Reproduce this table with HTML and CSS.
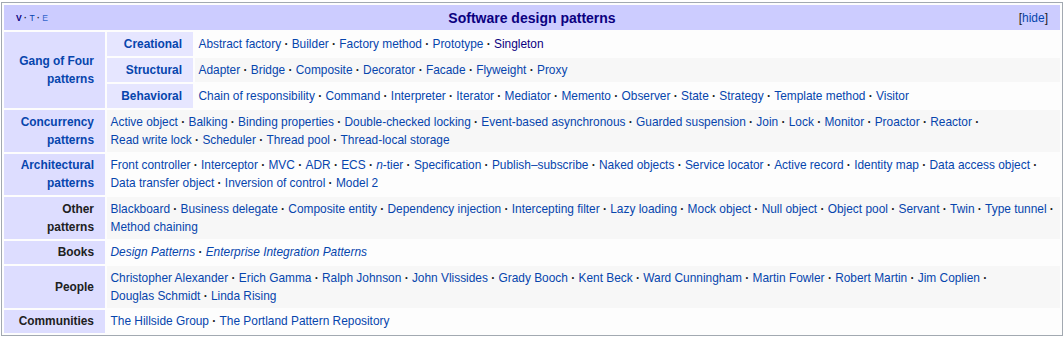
FILE: index.html
```html
<!DOCTYPE html>
<html lang="en">
<head>
<meta charset="utf-8">
<title>Software design patterns</title>
<link rel="stylesheet" href="styles.css">
</head>
<body>
<div class="navbox">
  <div class="title">
    <ul class="navbar">
      <li><a class="visited" href="#">V</a></li>
      <li><a href="#">T</a></li>
      <li><a class="edit" href="#">E</a></li>
    </ul>
    <a class="visited title-link" href="#">Software design patterns</a>
    <span class="toggle">[<a href="#">hide</a>]</span>
  </div>

  <div class="group gof"><a href="#">Gang of Four patterns</a></div>
  <div class="subgroup"><a href="#">Creational</a></div>
  <ul class="list sub odd">
    <li><a href="#">Abstract factory</a></li>
    <li><a href="#">Builder</a></li>
    <li><a href="#">Factory method</a></li>
    <li><a href="#">Prototype</a></li>
    <li><a class="visited" href="#">Singleton</a></li>
  </ul>
  <div class="subgroup"><a href="#">Structural</a></div>
  <ul class="list sub even">
    <li><a href="#">Adapter</a></li>
    <li><a href="#">Bridge</a></li>
    <li><a href="#">Composite</a></li>
    <li><a href="#">Decorator</a></li>
    <li><a href="#">Facade</a></li>
    <li><a href="#">Flyweight</a></li>
    <li><a href="#">Proxy</a></li>
  </ul>
  <div class="subgroup"><a href="#">Behavioral</a></div>
  <ul class="list sub odd">
    <li><a href="#">Chain of responsibility</a></li>
    <li><a href="#">Command</a></li>
    <li><a href="#">Interpreter</a></li>
    <li><a href="#">Iterator</a></li>
    <li><a href="#">Mediator</a></li>
    <li><a href="#">Memento</a></li>
    <li><a href="#">Observer</a></li>
    <li><a href="#">State</a></li>
    <li><a href="#">Strategy</a></li>
    <li><a href="#">Template method</a></li>
    <li><a href="#">Visitor</a></li>
  </ul>

  <div class="group"><a href="#">Concurrency patterns</a></div>
  <ul class="list wide even">
    <li><a href="#">Active object</a></li>
    <li><a href="#">Balking</a></li>
    <li><a href="#">Binding properties</a></li>
    <li><a href="#">Double-checked locking</a></li>
    <li><a href="#">Event-based asynchronous</a></li>
    <li><a href="#">Guarded suspension</a></li>
    <li><a href="#">Join</a></li>
    <li><a href="#">Lock</a></li>
    <li><a href="#">Monitor</a></li>
    <li><a href="#">Proactor</a></li>
    <li><a href="#">Reactor</a></li>
    <li><a href="#">Read write lock</a></li>
    <li><a href="#">Scheduler</a></li>
    <li><a href="#">Thread pool</a></li>
    <li><a href="#">Thread-local storage</a></li>
  </ul>

  <div class="group"><a href="#">Architectural patterns</a></div>
  <ul class="list wide odd">
    <li><a href="#">Front controller</a></li>
    <li><a href="#">Interceptor</a></li>
    <li><a href="#">MVC</a></li>
    <li><a href="#">ADR</a></li>
    <li><a href="#">ECS</a></li>
    <li><a href="#"><i>n</i>-tier</a></li>
    <li><a href="#">Specification</a></li>
    <li><a href="#">Publish–subscribe</a></li>
    <li><a href="#">Naked objects</a></li>
    <li><a href="#">Service locator</a></li>
    <li><a href="#">Active record</a></li>
    <li><a href="#">Identity map</a></li>
    <li><a href="#">Data access object</a></li>
    <li><a href="#">Data transfer object</a></li>
    <li><a href="#">Inversion of control</a></li>
    <li><a href="#">Model 2</a></li>
  </ul>

  <div class="group plain">Other patterns</div>
  <ul class="list wide even">
    <li><a href="#">Blackboard</a></li>
    <li><a href="#">Business delegate</a></li>
    <li><a href="#">Composite entity</a></li>
    <li><a href="#">Dependency injection</a></li>
    <li><a href="#">Intercepting filter</a></li>
    <li><a href="#">Lazy loading</a></li>
    <li><a href="#">Mock object</a></li>
    <li><a href="#">Null object</a></li>
    <li><a href="#">Object pool</a></li>
    <li><a href="#">Servant</a></li>
    <li><a href="#">Twin</a></li>
    <li><a href="#">Type tunnel</a></li>
    <li><a href="#">Method chaining</a></li>
  </ul>

  <div class="group plain">Books</div>
  <ul class="list wide odd">
    <li><a href="#"><i>Design Patterns</i></a></li>
    <li><a href="#"><i>Enterprise Integration Patterns</i></a></li>
  </ul>

  <div class="group plain">People</div>
  <ul class="list wide even">
    <li><a href="#">Christopher Alexander</a></li>
    <li><a href="#">Erich Gamma</a></li>
    <li><a href="#">Ralph Johnson</a></li>
    <li><a href="#">John Vlissides</a></li>
    <li><a href="#">Grady Booch</a></li>
    <li><a href="#">Kent Beck</a></li>
    <li><a href="#">Ward Cunningham</a></li>
    <li><a href="#">Martin Fowler</a></li>
    <li><a href="#">Robert Martin</a></li>
    <li><a href="#">Jim Coplien</a></li>
    <li><a href="#">Douglas Schmidt</a></li>
    <li><a href="#">Linda Rising</a></li>
  </ul>

  <div class="group plain">Communities</div>
  <ul class="list wide odd">
    <li><a href="#">The Hillside Group</a></li>
    <li><a href="#">The Portland Pattern Repository</a></li>
  </ul>
</div>
</body>
</html>
```

FILE: styles.css
```css
html, body {
  margin: 0;
  padding: 0;
  background: #ffffff;
}

body {
  font-family: "Liberation Sans", Arial, sans-serif;
  color: #202122;
}

a {
  color: #0645ad;
  text-decoration: none;
}

a.visited {
  color: #0b0080;
}

.navbox {
  margin: 2px 0 0 1px;
  width: 1056px;
  padding: 2px;
  border: 1px solid #a2a9b1;
  background: #fdfdfd;
  display: grid;
  grid-template-columns: 101px 86px 1fr;
  grid-auto-rows: auto;
  gap: 2px;
  font-size: 11.9px;
}

.title {
  grid-column: 1 / 4;
  background: #ccccff;
  height: 25px;
  display: grid;
  grid-template-columns: 1fr auto 1fr;
  align-items: center;
  padding: 0 12px;
}

.title-link {
  font-size: 14px;
  font-weight: bold;
}

.navbar {
  margin: 0;
  padding: 0;
  list-style: none;
  display: flex;
  font-size: 8.6px;
  justify-self: start;
  line-height: 12px;
}

.navbar a.visited {
  font-weight: bold;
}

.navbar li:not(:last-child)::after {
  content: "\a0·\a0";
  font-weight: bold;
  color: #202122;
}

.navbar .edit {
  color: #3366cc;
}

.toggle {
  justify-self: end;
  font-size: 12px;
  color: #202122;
}

.group,
.subgroup {
  display: flex;
  align-items: center;
  justify-content: flex-end;
  text-align: right;
  font-weight: bold;
  line-height: 18px;
  padding: 0 11px;
}

.group {
  background: #ddddff;
}

.subgroup {
  background: #e6e6ff;
}

.group.gof {
  grid-row: span 3;
}

.group.plain {
  color: #202122;
}

.list {
  margin: 0;
  padding: 2.75px 2px 2.75px 3.5px;
  list-style: none;
  line-height: 18px;
}

.list.sub {
  padding-top: 3px;
  padding-bottom: 3px;
}

.list.wide {
  grid-column: 2 / 4;
}

.list.even {
  background: #f7f7f7;
}

.list.odd {
  background: #fdfdfd;
}

.list li {
  display: inline;
  white-space: nowrap;
}

.list li:not(:last-child)::after {
  content: "\a0· ";
  font-weight: bold;
  color: #202122;
}
```
